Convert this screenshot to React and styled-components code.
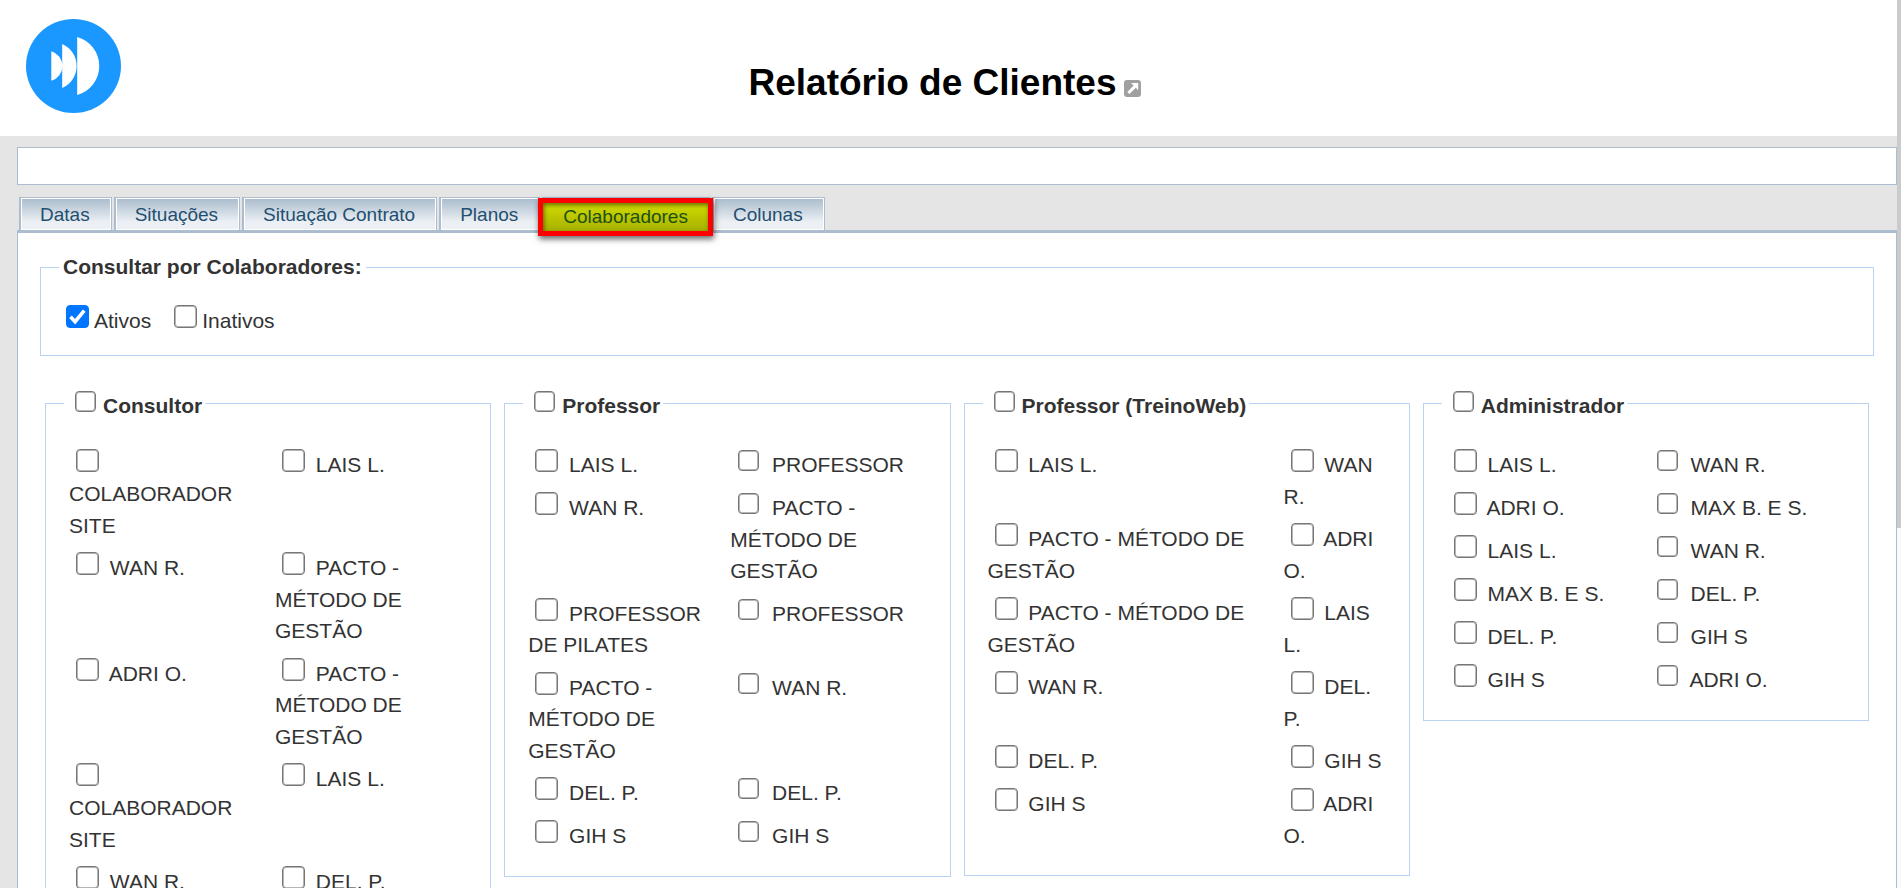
import React from 'react'
import styled, { createGlobalStyle, css } from 'styled-components'

const GlobalStyle = createGlobalStyle`
  * {
    box-sizing: border-box;
  }
  body {
    margin: 0;
    background: #e5e5e5;
    color: #333;
    font-family: "Liberation Sans", Arial, sans-serif;
    font-size: 21px;
  }
`

const Page = styled.div`
  display: flex;
  height: 100vh;
  overflow: hidden;
`

const Content = styled.div`
  flex: 1;
  min-width: 0;
`

const ScrollTrack = styled.div`
  flex: 0 0 4px;
  background: #fafafa;
`

const ScrollThumb = styled.div`
  height: 59.5%;
  background: #cbcbcb;
`

const Header = styled.header`
  display: grid;
  grid-template-columns: 1fr auto 1fr;
  height: 136px;
  padding: 19px 26px 0;
  background: #fff;
`

const Logo = styled.svg`
  display: block;
  width: 95px;
  height: 94px;
`

const Heading = styled.div`
  display: flex;
  align-items: flex-start;
  gap: 7px;
  padding: 43px 8px 0 0;
`

const Title = styled.h1`
  margin: 0;
  color: #000;
  font-size: 37px;
  line-height: 42px;
`

const HelpLink = styled.a`
  padding-top: 18px;
  svg {
    display: block;
    width: 17px;
    height: 17px;
  }
`

const Main = styled.main`
  padding: 11px 0 0 17px;
`

const MessageBar = styled.div`
  height: 38px;
  border: 1px solid #abbdce;
  background: #fff;
`

const TabList = styled.div`
  display: flex;
  gap: 2px;
  margin-top: 12px;
  padding-left: 2px;
`

const Tab = styled.button`
  height: 33px;
  padding: 2px 21px 0 19px;
  border: solid #abbdce;
  border-width: 1px 1px 0 2px;
  background: linear-gradient(#a9bbcc, #ecf0f4 75%);
  box-shadow: inset 0 0 0 1px #fff;
  color: #1f4f70;
  font-family: inherit;
  font-size: 19px;
  line-height: 22px;
  white-space: nowrap;

  ${props => props.$active && css`
    position: relative;
    padding-top: 5px;
    color: #1d4f10;

    &::before {
      content: "";
      position: absolute;
      z-index: 1;
      inset: 0 -4px -6px -6px;
      border: 5px solid #f00;
      background: linear-gradient(#d2dc00, #a6b000);
      box-shadow: 1px 3px 6px rgba(0, 0, 0, 0.6), inset 1px 2px 4px rgba(50, 60, 0, 0.7);
    }
  `}
`

const TabText = styled.span`
  position: relative;
  z-index: 2;
`

const Panel = styled.section`
  padding: 20px 22px;
  border: 1px solid #abbdce;
  border-top-width: 3px;
  background: #fff;
`

const Fieldset = styled.fieldset`
  min-width: 0;
  margin: 0;
  border: 1px solid #b9d3f5;
`

const FilterFieldset = styled(Fieldset)`
  padding: 19px 18px 21px;
`

const GroupFieldset = styled(Fieldset)`
  padding: 17px 18px 22px 23px;
`

const Legend = styled.legend`
  padding: 0 4px;
  font-weight: bold;
  line-height: 28px;
`

const GroupLegend = styled(Legend)`
  margin-left: -5px;
  padding: 1px 3px 3px;
`

const Tick = styled.input`
  appearance: none;
  width: 23px;
  height: 23px;
  margin: 5px 5px 6px 7px;
  border: 1px solid #767676;
  border-radius: 4px;
  background: #fff;
  box-shadow: inset 0 0 0 1px #b5b5b5;
  vertical-align: -6px;

  &:checked {
    border-color: #0075ff;
    background: #0075ff url("data:image/svg+xml,%3Csvg xmlns='http://www.w3.org/2000/svg' viewBox='0 0 21 21'%3E%3Cpath d='M3.5 10.8l4.6 4.9L17.2 4.6' fill='none' stroke='%23fff' stroke-width='3.6'/%3E%3C/svg%3E");
    box-shadow: none;
  }

  ${props => props.$small && css`
    width: 21px;
    height: 21px;
    margin: 6px 7px 6px 8px;
    vertical-align: -5px;
  `}
`

const StatusRow = styled.div`
  display: flex;
  gap: 16px;
`

const GroupRow = styled.div`
  display: grid;
  grid-template-columns: repeat(4, 1fr);
  align-items: start;
  gap: 13px;
  margin-top: 28px;
  padding: 0 5px;
`

const People = styled.div`
  display: grid;
  grid-template-columns: ${props => props.$first}px 1fr;
`

const Person = styled.label`
  display: block;
  min-height: 43px;
  padding: 4px 4px 2px 0;
  line-height: 0;
`

const PersonName = styled.span`
  line-height: 1.5;
`

const tabs = ['Datas', 'Situações', 'Situação Contrato', 'Planos', 'Colaboradores', 'Colunas']

const groups = [
  {
    title: 'Consultor',
    first: 206,
    people: [
      'COLABORADOR SITE', 'LAIS L.',
      'WAN R.', 'PACTO - MÉTODO DE GESTÃO',
      'ADRI O.', 'PACTO - MÉTODO DE GESTÃO',
      'COLABORADOR SITE', 'LAIS L.',
      'WAN R.', 'DEL. P.',
    ],
  },
  {
    title: 'Professor',
    first: 202,
    small: true,
    people: [
      'LAIS L.', 'PROFESSOR',
      'WAN R.', 'PACTO - MÉTODO DE GESTÃO',
      'PROFESSOR DE PILATES', 'PROFESSOR',
      'PACTO - MÉTODO DE GESTÃO', 'WAN R.',
      'DEL. P.', 'DEL. P.',
      'GIH S', 'GIH S',
    ],
  },
  {
    title: 'Professor (TreinoWeb)',
    first: 296,
    people: [
      'LAIS L.', 'WAN R.',
      'PACTO - MÉTODO DE GESTÃO', 'ADRI O.',
      'PACTO - MÉTODO DE GESTÃO', 'LAIS L.',
      'WAN R.', 'DEL. P.',
      'DEL. P.', 'GIH S',
      'GIH S', 'ADRI O.',
    ],
  },
  {
    title: 'Administrador',
    first: 202,
    small: true,
    people: [
      'LAIS L.', 'WAN R.',
      'ADRI O.', 'MAX B. E S.',
      'LAIS L.', 'WAN R.',
      'MAX B. E S.', 'DEL. P.',
      'DEL. P.', 'GIH S',
      'GIH S', 'ADRI O.',
    ],
  },
]

const Group = ({ title, first, small, people }) => (
  <GroupFieldset>
    <GroupLegend>
      <label>
        <Tick type="checkbox" $small />
        {title}
      </label>
    </GroupLegend>
    <People $first={first}>
      {people.map((name, i) => (
        <Person key={i}>
          <Tick type="checkbox" $small={small && i % 2 === 1} />{' '}
          <PersonName>{name}</PersonName>
        </Person>
      ))}
    </People>
  </GroupFieldset>
)

const App = () => {
  return (
    <Page>
      <GlobalStyle />
      <Content>
        <Header>
          <Logo viewBox="26 19 95 94" aria-hidden="true">
            <ellipse cx="73.5" cy="66" rx="47.5" ry="47" fill="#1a98ff" />
            <path
              d="M51.3 51.2A15.4 15.4 0 0 1 51.3 80.8ZM62.2 44A24 24 0 0 1 62.2 88ZM77.2 37A30.1 30.1 0 0 1 77.2 95Z"
              fill="#fff"
            />
          </Logo>
          <Heading>
            <Title>Relatório de Clientes</Title>
            <HelpLink href="#ajuda" aria-label="Ajuda">
              <svg viewBox="0 0 17 17" aria-hidden="true">
                <rect width="17" height="17" rx="3" fill="#a0a0a0" />
                <path d="M7 3h7.2v7.2l-2.4-2.4-6.4 6.2-2-2 6.2-6.4z" fill="#fff" />
              </svg>
            </HelpLink>
          </Heading>
        </Header>
        <Main>
          <MessageBar />
          <TabList role="tablist">
            {tabs.map(tab => (
              <Tab
                key={tab}
                type="button"
                role="tab"
                aria-selected={tab === 'Colaboradores'}
                $active={tab === 'Colaboradores'}
              >
                <TabText>{tab}</TabText>
              </Tab>
            ))}
          </TabList>
          <Panel>
            <FilterFieldset>
              <Legend>Consultar por Colaboradores:</Legend>
              <StatusRow>
                <label>
                  <Tick type="checkbox" defaultChecked />
                  Ativos
                </label>
                <label>
                  <Tick type="checkbox" />
                  Inativos
                </label>
              </StatusRow>
            </FilterFieldset>
            <GroupRow>
              {groups.map(group => (
                <Group key={group.title} {...group} />
              ))}
            </GroupRow>
          </Panel>
        </Main>
      </Content>
      <ScrollTrack>
        <ScrollThumb />
      </ScrollTrack>
    </Page>
  )
}

export default App
